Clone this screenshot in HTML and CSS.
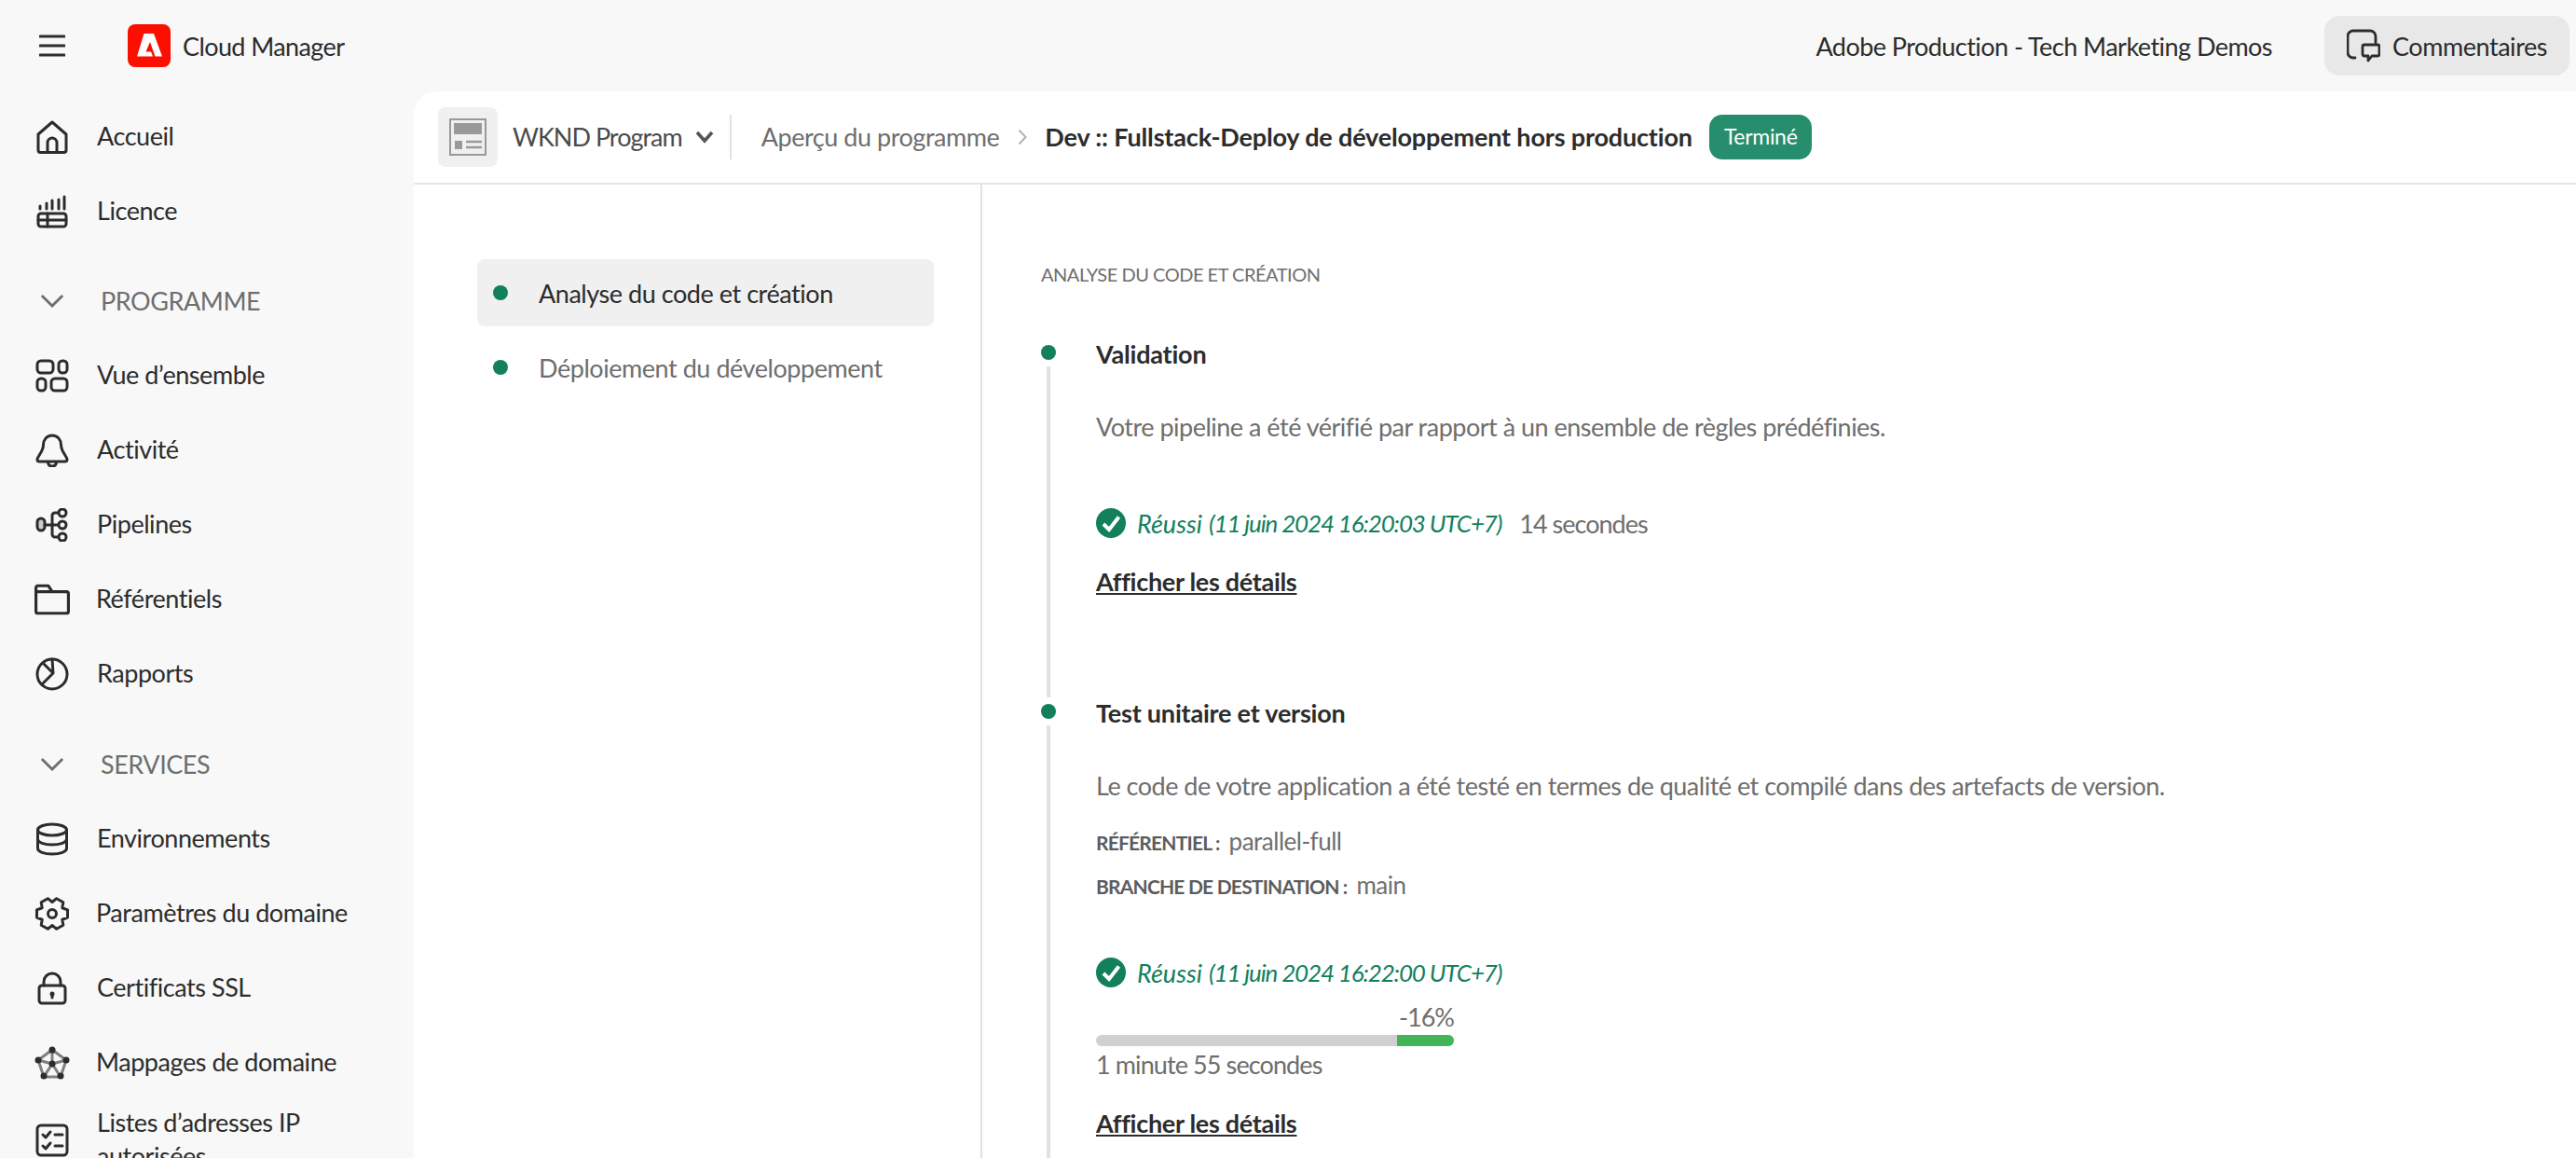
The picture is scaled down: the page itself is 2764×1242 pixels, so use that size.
FILE: index.html

```html
<!DOCTYPE html>
<html lang="fr">
<head>
  <meta charset="UTF-8">
  <title>Cloud Manager</title>
  <link rel="stylesheet" href="styles.css">
</head>
<body>
<header class="topbar">
  <div class="brand">
    <svg class="burger" viewBox="0 0 28 24"><path d="M1 2h26M1 12h26M1 22h26" fill="none" stroke="#2c2c2c" stroke-width="3" stroke-linecap="round"/></svg>
    <span class="logo"><svg viewBox="0 0 46 46"><path d="M17.500 10h10.500L37 34.500h-7.500L24 19l-4.500 10.500h5.500l2 5H10z" fill="#fff"/></svg></span>
    <span class="brand-name">Cloud Manager</span>
  </div>
  <div class="top-right">
    <span class="org">Adobe Production - Tech Marketing Demos</span>
    <button class="feedback">
      <svg class="icon-feedback" viewBox="0 0 36 36"><g fill="none" stroke="#2c2c2c" stroke-width="2.800" stroke-linecap="round" stroke-linejoin="round"><path d="M9 31H7a6 6 0 0 1-6-6V8a6 6 0 0 1 6-6h18a6 6 0 0 1 6 6v7"/><path d="M19 17h14a2 2 0 0 1 2 2v8a2 2 0 0 1-2 2h-6l-4 5v-5h-4a2 2 0 0 1-2-2v-8a2 2 0 0 1 2-2z"/></g></svg>
      Commentaires
    </button>
  </div>
</header>

<div class="layout">
  <nav class="sidebar">
    <a class="nav-row"><svg class="ico" viewBox="0 0 36 36"><path d="M3 15L18 2l15 13v17a2.500 2.500 0 0 1-2.500 2.500h-25A2.500 2.500 0 0 1 3 32zM13 34V24a5 5 0 0 1 10 0v10"/></svg>Accueil</a>
    <a class="nav-row"><svg class="ico" viewBox="0 0 36 36"><path d="M5 15v-3M12 15V9M18 15V6M25 15V5M31 15V2"/><rect x="3" y="20" width="30" height="14" rx="3"/><path d="M3 27h30M13 20v14"/></svg>Licence</a>

    <div class="nav-section"><svg class="chev" viewBox="0 0 28 16"><path d="M2 2l12 12L26 2"/></svg>PROGRAMME</div>
    <a class="nav-row"><svg class="ico" viewBox="0 0 36 36"><rect x="2" y="2" width="17" height="13" rx="4"/><rect x="25" y="2" width="9" height="13" rx="4"/><rect x="2" y="21" width="9" height="13" rx="4"/><rect x="17" y="21" width="17" height="13" rx="4"/></svg>Vue d’ensemble</a>
    <a class="nav-row"><svg class="ico" viewBox="0 0 36 36"><path d="M18 2c-6 0-9.500 5-9.500 10 0 8-6.500 12-6.500 16 0 1.500 1 2 2.500 2h27c1.500 0 2.500-.5 2.500-2 0-4-6.500-8-6.500-16C27.500 7 24 2 18 2zM13.500 30c0 3.500 2 5 4.500 5s4.500-1.500 4.500-5"/></svg>Activité</a>
    <a class="nav-row"><svg class="ico" viewBox="0 0 36 36"><rect x="2" y="11" width="8" height="13" rx="4" fill="#ccc"/><path d="M10 18h14M18 18V8a3 3 0 0 1 3-3h3M18 18v10a3 3 0 0 0 3 3h3"/><circle cx="29" cy="5" r="4"/><circle cx="29" cy="18" r="4"/><circle cx="29" cy="31" r="4"/></svg>Pipelines</a>
    <a class="nav-row"><svg class="ico ico-lg" viewBox="0 0 36 32"><path d="M1.500 4a2 2 0 0 1 2-2h10.500l4 6h14.500a2 2 0 0 1 2 2v18a2 2 0 0 1-2 2h-29a2 2 0 0 1-2-2zM1.500 8H18"/></svg>Référentiels</a>
    <a class="nav-row"><svg class="ico" viewBox="0 0 36 36"><circle cx="18" cy="18" r="16"/><path d="M18 2l1 15-12 12M8 6l11 11"/></svg>Rapports</a>

    <div class="nav-section nav-section-b"><svg class="chev" viewBox="0 0 28 16"><path d="M2 2l12 12L26 2"/></svg>SERVICES</div>
    <a class="nav-row"><svg class="ico" viewBox="0 0 36 36"><ellipse cx="18" cy="8" rx="15.500" ry="6"/><path d="M2.500 8v20c0 3.500 7 6 15.500 6s15.500-2.500 15.500-6V8M2.500 18c0 3.500 7 6 15.500 6s15.500-2.500 15.500-6"/></svg>Environnements</a>
    <a class="nav-row"><svg class="ico ico-lg" viewBox="0 0 36 36"><path d="M34.500 13.900v8.200l-5.700 2.150 1 5.950-7.100 4.100-4.700-3.800-4.700 3.800-7.100-4.100 1-5.950-5.700-2.150v-8.200l5.700-2.150-1-5.950 7.100-4.100 4.700 3.800 4.700-3.800 7.100 4.100-1 5.950z"/><circle cx="18" cy="18" r="4.500"/></svg>Paramètres du domaine</a>
    <a class="nav-row"><svg class="ico" viewBox="0 0 36 36"><rect x="4" y="15" width="28" height="19" rx="3"/><path d="M9 15v-4a9 9 0 0 1 18 0v4"/><circle cx="18" cy="24" r="2.500" fill="#2c2c2c" stroke="none"/><path d="M18 25v3"/></svg>Certificats SSL</a>
    <a class="nav-row"><svg class="ico ico-lg" viewBox="0 0 36 36"><g stroke="#808080"><path d="M18 4l15 11-6 18H9L3 15zM18 4v15M3 15l15 4 15-4M9 33l9-14 9 14"/></g><g fill="#2c2c2c" stroke="none"><circle cx="18" cy="4" r="3.500"/><circle cx="3" cy="15" r="3.500"/><circle cx="33" cy="15" r="3.500"/><circle cx="9" cy="32" r="3.500"/><circle cx="27" cy="32" r="3.500"/><circle cx="18" cy="19" r="3.500"/></g></svg>Mappages de domaine</a>
    <a class="nav-row"><svg class="ico" viewBox="0 0 36 36"><rect x="2" y="2" width="32" height="32" rx="4"/><path d="M8 12l3 3 5-6M8 24l3 3 5-6M21 12h8M21 24h8"/></svg><span class="wrap-label">Listes d’adresses IP autorisées</span></a>
  </nav>

  <section class="panel">
    <div class="crumbs">
      <span class="prog-box"><svg viewBox="0 0 40 40"><rect x="1" y="1" width="38" height="38" fill="none" stroke="#999" stroke-width="2"/><path d="M5 5h30v12H5zM6 24h8v9H6z" fill="#999"/><path d="M18 25h17M18 31h17" stroke="#999" stroke-width="2.500"/></svg></span>
      <span class="crumb-text prog-name">WKND Program</span>
      <svg class="prog-chev" viewBox="0 0 20 14"><path d="M2 2l8 9 8-9" fill="none" stroke="#555" stroke-width="3.500"/></svg>
      <span class="crumb-sep"></span>
      <span class="crumb-text crumb-link">Aperçu du programme</span>
      <svg class="crumb-arrow" viewBox="0 0 10 18"><path d="M1.500 1.500L8.500 9l-7 7.500" fill="none" stroke="#b3b3b3" stroke-width="2"/></svg>
      <span class="crumb-text crumb-current">Dev :: Fullstack-Deploy de développement hors production</span>
      <span class="badge">Terminé</span>
    </div>

    <div class="columns">
      <aside class="steps">
        <div class="step-link active"><i class="dot"></i>Analyse du code et création</div>
        <div class="step-link"><i class="dot"></i>Déploiement du développement</div>
      </aside>

      <main class="detail">
        <div class="detail-title">ANALYSE DU CODE ET CRÉATION</div>

        <article class="stage stage-one">
          <i class="dot stage-dot"></i>
          <h3>Validation</h3>
          <p class="desc">Votre pipeline a été vérifié par rapport à un ensemble de règles prédéfinies.</p>
          <div class="status status-first">
            <svg class="check" viewBox="0 0 32 32"><circle cx="16" cy="16" r="16" fill="#12805c"/><path d="M8 17l6 6L24.500 9.500" fill="none" stroke="#fff" stroke-width="4"/></svg>
            <em>Réussi</em><em class="stamp">(11 juin 2024 16:20:03 UTC+7)</em><span class="time">14 secondes</span>
          </div>
          <a class="details">Afficher les détails</a>
        </article>

        <article class="stage stage-two">
          <i class="dot stage-dot"></i>
          <h3>Test unitaire et version</h3>
          <p class="desc">Le code de votre application a été testé en termes de qualité et compilé dans des artefacts de version.</p>
          <div class="meta meta-first"><b>RÉFÉRENTIEL :</b>parallel-full</div>
          <div class="meta"><b>BRANCHE DE DESTINATION :</b>main</div>
          <div class="status status-second">
            <svg class="check" viewBox="0 0 32 32"><circle cx="16" cy="16" r="16" fill="#12805c"/><path d="M8 17l6 6L24.500 9.500" fill="none" stroke="#fff" stroke-width="4"/></svg>
            <em>Réussi</em><em class="stamp">(11 juin 2024 16:22:00 UTC+7)</em>
          </div>
          <div class="progress">
            <div class="progress-label">-16%</div>
            <div class="progress-bar"><span class="progress-fill"></span></div>
            <div class="progress-time">1 minute 55 secondes</div>
          </div>
          <a class="details">Afficher les détails</a>
        </article>
      </main>
    </div>
  </section>
</div>
</body>
</html>
```

FILE: styles.css

```css
* { box-sizing: border-box; }
html, body { height: 100%; }
body { margin: 0; background: #f8f8f8; color: #2c2c2c; font-family: 'Lato', sans-serif; font-size: 27px; letter-spacing: -0.45px; overflow: hidden; }

.topbar { height: 98px; display: flex; align-items: center; justify-content: space-between; }
.brand { display: flex; align-items: center; padding-left: 42px; }
.burger { width: 28px; height: 24px; }
.logo { width: 46px; height: 46px; margin-left: 67px; background: #fa0f00; border-radius: 8px; display: block; }
.logo svg { display: block; width: 46px; height: 46px; }
.brand-name { margin-left: 13px; letter-spacing: -0.6px; }
.top-right { display: flex; align-items: center; padding-right: 7px; }
.org { margin-right: 56px; letter-spacing: -0.54px; }
.feedback { width: 263px; height: 64px; border: 0; border-radius: 16px; background: #e8e8e8; color: #2c2c2c; font: inherit; letter-spacing: -0.45px; display: flex; align-items: center; padding: 0 0 0 24px; gap: 13px; }
.icon-feedback { width: 36px; height: 36px; }

.layout { display: flex; height: calc(100% - 98px); }
.sidebar { width: 444px; flex: none; padding-top: 9px; }
.nav-row { display: flex; align-items: center; min-height: 80px; padding: 6px 0 8px 38px; gap: 30px; line-height: 36px; }
.ico { width: 36px; height: 36px; flex: none; fill: none; stroke: #2c2c2c; stroke-width: 3; stroke-linecap: round; stroke-linejoin: round; position: relative; top: 1px; }
.ico-lg { width: 38px; margin-right: -2px; margin-left: -1px; }
.wrap-label { width: 240px; }
.nav-section { display: flex; align-items: center; height: 80px; margin-top: 16px; padding: 0 0 2px 43px; gap: 39px; color: #6e6e6e; }
.nav-section-b { margin-top: 17px; }
.chev { width: 26px; height: 15px; fill: none; stroke: #6e6e6e; stroke-width: 3; }

.panel { flex: 1; background: #fff; border-top-left-radius: 24px; overflow: hidden; }
.crumbs { height: 100px; display: flex; align-items: center; padding-left: 26px; border-bottom: 2px solid #e6e6e6; }
.crumb-text { padding-bottom: 2px; }
.prog-box { width: 64px; height: 64px; background: #f0f0f0; border-radius: 8px; display: flex; align-items: center; justify-content: center; }
.prog-box svg { width: 40px; height: 40px; }
.prog-name { margin-left: 16px; color: #4b4b4b; letter-spacing: -1px; }
.prog-chev { width: 20px; height: 14px; margin-left: 14px; }
.crumb-sep { width: 2px; height: 48px; background: #e1e1e1; margin: 0 32px 0 17px; }
.crumb-link { color: #6e6e6e; }
.crumb-arrow { width: 10px; height: 18px; margin: 0 19px 0 20px; }
.crumb-current { font-weight: 700; color: #2c2c2c; letter-spacing: -0.16px; }
.badge { margin-left: 18px; height: 48px; padding: 0 16px; line-height: 46px; background: #268e6c; color: #fff; border-radius: 14px; font-size: 23px; letter-spacing: -0.3px; }

.columns { display: flex; height: 100%; }
.steps { width: 610px; flex: none; padding: 80px 50px 0 68px; border-right: 2px solid #e1e1e1; }
.step-link { height: 72px; display: flex; align-items: center; padding-left: 17px; gap: 33px; color: #6e6e6e; border-radius: 8px; margin-bottom: 8px; }
.step-link.active { background: #f0f0f0; color: #2c2c2c; }
.dot { display: block; width: 16px; height: 16px; border-radius: 50%; background: #12805c; flex: none; }

.detail { flex: 1; padding: 83px 0 0 63px; }
.detail-title { font-size: 20px; line-height: 26px; color: #6e6e6e; letter-spacing: -0.48px; }
.stage { position: relative; padding-left: 59px; }
.stage::before { content: ""; position: absolute; left: 6px; top: 31px; bottom: -1px; width: 4px; background: #e1e1e1; }
.stage-one { margin-top: 55px; min-height: 385px; }
.stage-two { min-height: 700px; }
.stage-dot { position: absolute; left: 0; top: 8px; }
.stage h3 { margin: 0; font-size: 27px; line-height: 36px; font-weight: 700; letter-spacing: -0.2px; }
.desc { margin: 42px 0 0; line-height: 36px; color: #6e6e6e; letter-spacing: -0.5px; }
.status { display: flex; align-items: center; height: 36px; color: #12805c; }
.status-first { margin-top: 67px; }
.status-second { margin-top: 56px; }
.status em { margin-right: 7px; letter-spacing: 0; }
.status em.stamp { font-size: 26px; letter-spacing: -1.15px; margin-right: 0; }
.check { width: 32px; height: 32px; margin-right: 12px; flex: none; }
.time { color: #6e6e6e; margin-left: 19px; letter-spacing: -1px; }
.details { display: inline-block; margin-top: 27px; font-weight: 700; color: #2c2c2c; text-decoration: underline; line-height: 36px; letter-spacing: -0.3px; }
.meta { margin-top: 9px; line-height: 37px; font-size: 26px; color: #6e6e6e; letter-spacing: -0.5px; }
.meta-first { margin-top: 23px; }
.meta b { font-size: 21px; margin-right: 10px; color: #5c5c5c; letter-spacing: -0.8px; }
.progress { width: 384px; margin-top: 14px; }
.progress-label { text-align: right; line-height: 32px; color: #6e6e6e; letter-spacing: -1px; }
.progress-bar { height: 12px; margin-top: 3px; border-radius: 6px; background: #d0d0d0; overflow: hidden; display: flex; justify-content: flex-end; }
.progress-fill { width: 16%; background: #44b556; }
.progress-time { line-height: 36px; margin-top: 2px; color: #6e6e6e; white-space: nowrap; letter-spacing: -0.9px; }
```
